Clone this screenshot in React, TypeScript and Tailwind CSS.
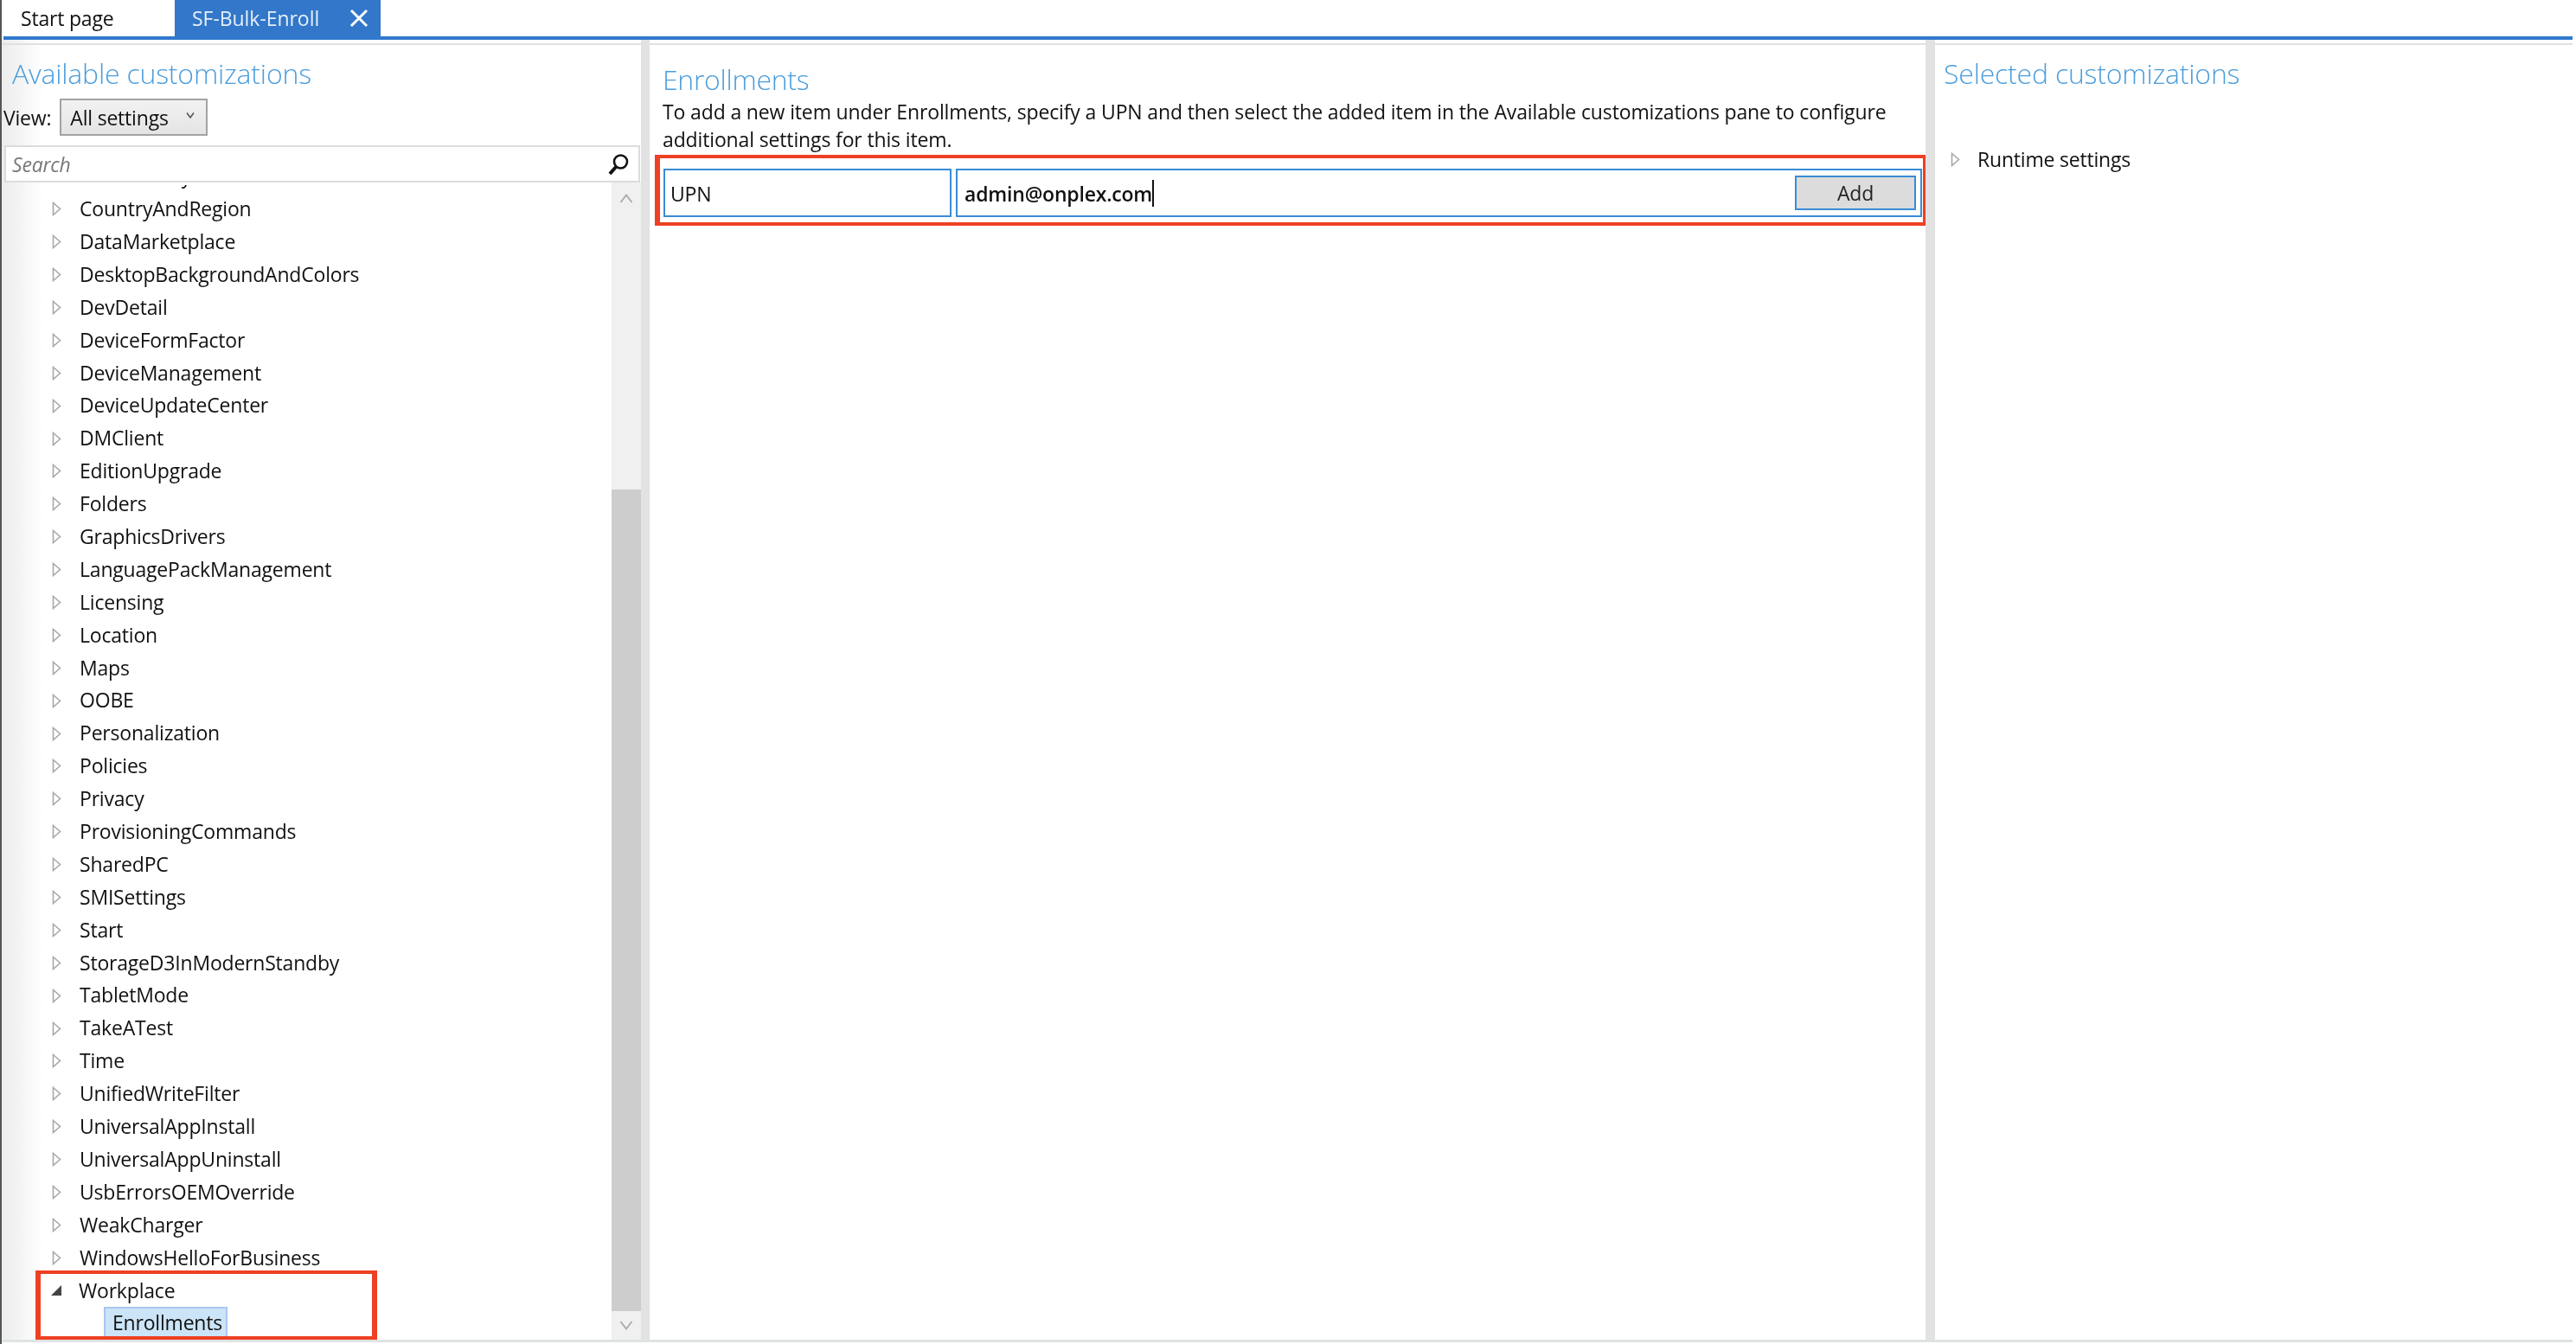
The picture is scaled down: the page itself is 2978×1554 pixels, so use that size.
import React from 'react';

const settings = [
  'ConnectivityProfiles', 'CountryAndRegion', 'DataMarketplace', 'DesktopBackgroundAndColors', 'DevDetail', 'DeviceFormFactor',
  'DeviceManagement', 'DeviceUpdateCenter', 'DMClient', 'EditionUpgrade', 'Folders', 'GraphicsDrivers',
  'LanguagePackManagement', 'Licensing', 'Location', 'Maps', 'OOBE', 'Personalization', 'Policies', 'Privacy',
  'ProvisioningCommands', 'SharedPC', 'SMISettings', 'Start', 'StorageD3InModernStandby', 'TabletMode', 'TakeATest',
  'Time', 'UnifiedWriteFilter', 'UniversalAppInstall', 'UniversalAppUninstall', 'UsbErrorsOEMOverride', 'WeakCharger',
  'WindowsHelloForBusiness',
];

const Collapsed = () => (
  <svg width="11" height="17" viewBox="0 0 11 17" className="shrink-0">
    <path d="M1.5 1.5 L9.5 8.5 L1.5 15.5 Z" fill="#fff" stroke="#a8a8a8" strokeWidth="1.6" />
  </svg>
);

const Row = ({ label }: { label: string }) => (
  <div className="flex h-[37.9px] items-center pl-[58px]">
    <Collapsed />
    <span className="ml-[21px] -mt-[1px] whitespace-nowrap">{label}</span>
  </div>
);

const Chevron = ({ up }: { up?: boolean }) => (
  <svg width="16" height="11" viewBox="0 0 16 11">
    <path d={up ? 'M1.5 10 L8 1.5 L14.5 10' : 'M1.5 1 L8 9.5 L14.5 1'} fill="none" stroke="#a9a9a9" strokeWidth="1.8" />
  </svg>
);

const App: React.FC = () => {
  return (
    <div className="flex h-[1554px] w-[2978px] flex-col overflow-hidden border-l-2 border-[#555555] bg-white pr-[4px] font-['Open_Sans',sans-serif] text-[23px] tracking-[-0.2px] text-[#111111] blur-[0.6px]">
      {/* tab strip */}
      <div className="flex h-[42px] shrink-0 items-stretch">
        <div className="flex w-[200px] items-center pl-[22px]">Start page</div>
        <div className="flex w-[238px] items-center bg-[#3277c9] pl-[20px] tracking-[-0.05px] text-[#e4effa]">
          <span>SF-Bulk-Enroll</span>
          <svg width="22" height="22" viewBox="0 0 22 22" className="ml-[35px]">
            <path d="M2 2 L20 20 M20 2 L2 20" stroke="#ffffff" strokeWidth="3" />
          </svg>
        </div>
      </div>
      <div className="ml-[2px] h-[4px] shrink-0 bg-[#3079cd]" />

      <div className="flex min-h-0 flex-1">
        {/* available customizations */}
        <div className="flex w-[739px] shrink-0 flex-col bg-[linear-gradient(to_right,#ececec,#ffffff_48px)]">
          <div className="mt-[4px] h-[2px] shrink-0 bg-[#e1e1e1]" />
          <div className="flex h-[62px] shrink-0 items-center pl-[12px] pt-[3px] text-[32px] font-light tracking-[-0.2px] text-[#4a9ddc]">
            Available customizations
          </div>
          <div className="flex h-[43px] shrink-0 items-center pl-[2px]">
            <span className="pt-[2px]">View:</span>
            <div className="ml-[10px] flex h-[43px] w-[171px] items-center border-2 border-[#a3a3a3] bg-[linear-gradient(#f2f2f2,#e4e4e4)] pl-[10px]">
              <span className="pt-[2px]">All settings</span>
              <svg width="10" height="9" viewBox="0 0 10 9" className="ml-[20px] -mt-[4px]">
                <path d="M1 1.5 L5 7 L9 1.5" fill="none" stroke="#555555" strokeWidth="1.6" />
              </svg>
            </div>
          </div>
          <div className="ml-[3px] mt-[11px] flex h-[43px] w-[735px] shrink-0 items-center justify-between border-2 border-[#dcdcdc] bg-white pl-[7px] pr-[10px]">
            <span className="pt-[2px] italic text-[#777777]">Search</span>
            <svg width="26" height="26" viewBox="0 0 26 26">
              <circle cx="15.5" cy="10" r="7.5" fill="none" stroke="#111111" strokeWidth="2.6" />
              <path d="M10 16 L3 24" stroke="#111111" strokeWidth="4" />
            </svg>
          </div>
          <div className="flex min-h-0 flex-1">
            <div className="mt-[3px] min-w-0 flex-1 overflow-hidden">
              <div className="-mt-[29px]">
                {settings.map((s) => (
                  <Row key={s} label={s} />
                ))}
                <div className="-mt-[4px] ml-[39px] h-[80px] w-[395px] border-x-[6px] border-y-4 border-[#ee4023]">
                  <div className="flex h-[38px] items-center pl-[11px]">
                    <svg width="14" height="14" viewBox="0 0 14 14" className="shrink-0">
                      <path d="M13 1 L13 13 L1 13 Z" fill="#444444" />
                    </svg>
                    <span className="ml-[19px] -mt-[1px]">Workplace</span>
                  </div>
                  <div className="ml-[73px] flex h-[34px] w-[143px] items-start border-x-2 border-t-2 border-[#a9c6f0] bg-[#cce4f7] pl-[8px] leading-[32px]">
                    Enrollments
                  </div>
                </div>
              </div>
            </div>
            {/* scrollbar */}
            <div className="flex w-[34px] shrink-0 flex-col bg-[#f0f0f0]">
              <div className="flex h-[36px] shrink-0 items-center justify-center">
                <Chevron up />
              </div>
              <div className="h-[319px] shrink-0" />
              <div className="flex-1 bg-[#cdcdcd]" />
              <div className="flex h-[33px] shrink-0 items-center justify-center">
                <Chevron />
              </div>
            </div>
          </div>
        </div>

        <div className="w-[10px] shrink-0 bg-[#e2e2e2]" />

        {/* enrollments editor */}
        <div className="flex w-[1475px] shrink-0 flex-col">
          <div className="mt-[4px] h-[2px] shrink-0 bg-[#e1e1e1]" />
          <div className="mt-[20px] pl-[15px] text-[32px] font-light leading-[40px] tracking-[-0.3px] text-[#4a9ddc]">Enrollments</div>
          <p className="mt-[1px] w-[1445px] pl-[15px] leading-[32px] tracking-[-0.14px]">
            To add a new item under Enrollments, specify a UPN and then select the added item in the Available customizations pane to configure additional settings for this item.
          </p>
          <div className="ml-[6px] mt-[2px] flex h-[82px] w-[1472px] gap-[5px] border-x-[6px] border-y-4 border-[#ee4023] pl-[4px] pr-[1px] pt-[12px]">
            <div className="flex h-[56px] w-[333px] items-center border-2 border-[#3a8bd6] pl-[6px] pt-[3px]">UPN</div>
            <div className="flex h-[56px] flex-1 items-center border-2 border-[#3a8bd6] pl-[8px] pr-[5px]">
              <span className="pt-[2px] font-semibold">admin@onplex.com</span>
              <div className="h-[31px] w-[2px] bg-[#111111]" />
              <button className="ml-auto h-[40px] w-[140px] border-2 border-[#3a8bd6] bg-[#dcdcdc] text-[#222222]">Add</button>
            </div>
          </div>
        </div>

        <div className="w-[11px] shrink-0 bg-[#e2e2e2]" />

        {/* selected customizations */}
        <div className="flex min-w-0 flex-1 flex-col">
          <div className="mt-[4px] h-[2px] shrink-0 bg-[#e1e1e1]" />
          <div className="flex h-[62px] shrink-0 items-center pl-[10px] pt-[3px] text-[32px] font-light tracking-[-0.2px] text-[#4a9ddc]">
            Selected customizations
          </div>
          <div className="mt-[53px] flex items-center pl-[18px]">
            <Collapsed />
            <span className="ml-[20px]">Runtime settings</span>
          </div>
        </div>
      </div>

      <div className="mb-[2px] h-[3px] shrink-0 bg-[#dfe3e3]" />
    </div>
  );
};

export default App;
